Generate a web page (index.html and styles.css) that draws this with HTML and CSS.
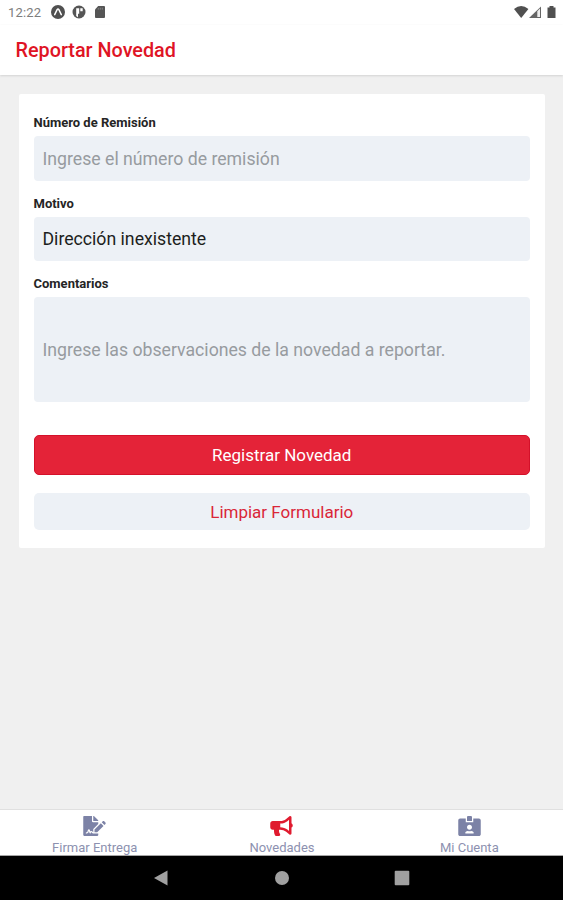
FILE: index.html
```html
<!DOCTYPE html>
<html lang="es">
<head>
<meta charset="utf-8">
<title>Reportar Novedad</title>
<link rel="stylesheet" href="styles.css">
</head>
<body>
<div class="status">
  <span class="clock">12:22</span>
  <svg class="app-icon" viewBox="0 0 14 14"><circle cx="7" cy="7" r="7" fill="#505050"/><path d="M3.7 9.6 6.1 4.7Q7 3.4 7.9 4.7L10.3 9.6" fill="none" stroke="#fff" stroke-width="1.5" stroke-linecap="round"/></svg>
  <svg class="app-icon second" viewBox="0 0 14 14"><circle cx="7" cy="7" r="6.5" fill="#555"/><path d="M4.2 3.2h3v5.6H6v3.4L4.2 11zM8.3 3.3h2.4v3H8.3z" fill="#fff"/></svg>
  <svg class="sd-icon" viewBox="0 0 11 13"><path d="M3.5 0H10q1 0 1 1v11q0 1-1 1H1q-1 0-1-1V3.7z" fill="#555"/><path d="M3.6 2v2M5.8 1.8V4M8 1.8V4" stroke="#888"/></svg>
  <svg class="signals" viewBox="0 0 43 14"><path d="M0 4Q7.2-1.8 14.4 4L7.2 13z" fill="#505050"/><path d="M15 13 27 1.5V13z" fill="#666"/><path d="M23.3 6.2 26 3.5V12h-2.7z" fill="#eee"/><path d="M33.5 2.5h2V1h4v1.5h2V13h-8z" fill="#505050"/></svg>
</div>
<header class="header"><h1>Reportar Novedad</h1></header>
<main class="content">
  <form class="card">
    <label class="label" for="remision">Número de Remisión</label>
    <input class="field" id="remision" placeholder="Ingrese el número de remisión">
    <label class="label" for="motivo">Motivo</label>
    <input class="field motivo" id="motivo" value="Dirección inexistente">
    <label class="label comments-label" for="comentarios">Comentarios</label>
    <input class="field comments" id="comentarios" placeholder="Ingrese las observaciones de la novedad a reportar.">
    <button class="button primary" type="button">Registrar Novedad</button>
    <button class="button secondary" type="button">Limpiar Formulario</button>
  </form>
</main>
<nav class="tabs">
  <a class="tab"><svg viewBox="0 0 576 512"><path d="M218.17 424.14c-2.95-5.92-8.09-6.52-10.17-6.52s-7.22.59-10.02 6.19l-7.67 15.34c-6.37 12.78-25.03 11.37-29.48-2.09L144 386.59l-10.61 31.88c-5.89 17.66-22.38 29.53-41 29.53H80c-8.84 0-16-7.16-16-16s7.16-16 16-16h12.39c4.83 0 9.11-3.08 10.64-7.66l18.19-54.64c3.3-9.81 12.44-16.41 22.78-16.41s19.48 6.59 22.77 16.41l13.88 41.64c19.75-16.19 54.06-9.7 66 14.16 1.89 3.78 5.49 5.95 9.36 6.26v-82.12l128-127.09V160H248c-13.2 0-24-10.8-24-24V0H24C10.7 0 0 10.7 0 24v464c0 13.3 10.7 24 24 24h336c13.3 0 24-10.7 24-24v-40l-128-.11c-16.12-.31-30.58-9.28-37.83-23.75zM384 121.9c0-6.3-2.5-12.4-7-16.9L279.1 7c-4.5-4.5-10.6-7-17-7H256v128h128v-6.1zm-96 225.06V416h68.99l161.68-162.78-67.88-67.88L288 346.96zm280.54-179.63l-31.87-31.87c-9.94-9.94-26.07-9.94-36.01 0l-27.25 27.25 67.88 67.88 27.25-27.25c9.95-9.94 9.95-26.07 0-36.01z"/></svg><span>Firmar Entrega</span></a>
  <a class="tab active"><svg viewBox="0 0 576 512"><path d="M576 240c0-23.63-12.95-44.04-32-55.12V32.01C544 23.26 537.02 0 512 0c-7.12 0-14.19 2.38-19.98 7.02l-85.03 68.03C364.28 109.19 310.66 128 256 128H64c-35.35 0-64 28.65-64 64v96c0 35.35 28.65 64 64 64h33.7c-1.39 10.48-2.18 21.14-2.18 32 0 39.77 9.26 77.35 25.56 110.94 5.19 10.69 16.52 17.06 28.4 17.06h74.28c26.05 0 41.69-29.84 25.9-50.56-16.4-21.52-26.15-48.36-26.15-77.44 0-11.11 1.62-21.79 4.41-32H256c54.66 0 108.28 18.81 150.98 52.95l85.03 68.03a32.023 32.023 0 0 0 19.98 7.02c24.92 0 32-22.78 32-32V295.13C563.05 284.04 576 263.63 576 240zm-96 141.42l-33.05-26.44C392.95 311.78 325.12 288 256 288v-96c69.12 0 136.95-23.78 190.95-66.98L480 98.58v282.84z"/></svg><span>Novedades</span></a>
  <a class="tab"><svg viewBox="0 0 576 512"><path d="M528 64H384v96H192V64H48C21.5 64 0 85.5 0 112v352c0 26.5 21.5 48 48 48h480c26.5 0 48-21.5 48-48V112c0-26.5-21.5-48-48-48zM288 224c35.3 0 64 28.7 64 64s-28.7 64-64 64-64-28.7-64-64 28.7-64 64-64zm93.3 224H194.7c-10.4 0-18.8-10-15.6-19.8 8.3-25.6 32.4-44.2 60.9-44.2h8.2c12.3 5.1 25.7 8 39.8 8s27.6-2.9 39.8-8h8.2c28.4 0 52.5 18.5 60.9 44.2 3.2 9.9-5.2 19.8-15.6 19.8zM352 32c0-17.7-14.3-32-32-32h-64c-17.7 0-32 14.3-32 32v96h128V32z"/></svg><span>Mi Cuenta</span></a>
</nav>
<div class="system-nav">
  <svg viewBox="0 0 16 16"><path d="M1 8 14.5.5v15z"/></svg>
  <svg viewBox="0 0 16 16"><circle cx="8" cy="8" r="7"/></svg>
  <svg viewBox="0 0 16 16"><rect x=".7" y=".7" width="14.6" height="14.6" rx="1"/></svg>
</div>
</body>
</html>
```

FILE: styles.css
```css
* { box-sizing: border-box; }
body {
  margin: 0;
  height: 900px;
  display: flex;
  flex-direction: column;
  overflow: hidden;
  background: #f0f0f0;
  font-family: Roboto, sans-serif;
}
.status {
  height: 25px;
  display: flex;
  align-items: center;
  padding: 0 6px 1px 8px;
  background: #fff;
}
.clock { width: 43px; font-size: 13px; letter-spacing: 0.2px; color: #7d7d7d; }
.app-icon { width: 14px; height: 14px; }
.second { margin-left: 7px; }
.sd-icon { width: 10px; height: 12px; margin-left: 9px; }
.signals { width: 43px; height: 14px; margin-left: auto; }
.header {
  height: 50px;
  padding-left: 15.5px;
  background: #fff;
  box-shadow: 0 1px 2px #d4d4d4;
}
h1 {
  margin: 0;
  font-size: 19.8px;
  line-height: 51px;
  font-weight: 500;
  color: #df1425;
}
.content { flex: 1; padding: 19px 18.5px 0 19px; }
.card {
  height: 454px;
  display: flex;
  flex-direction: column;
  padding: 21px 14.5px 0;
  background: #fff;
  border-radius: 2px;
}
.label {
  height: 21px;
  font-size: 13px;
  line-height: 16px;
  font-weight: 700;
  color: #252525;
}
.field {
  flex: none;
  width: 100%;
  height: 44.5px;
  margin: 0 0 15.5px;
  padding: 1px 9px 0;
  border: 0;
  border-radius: 4px;
  outline: 0;
  background: #edf1f6;
  color: #1c1e20;
  font: 17.7px Roboto, sans-serif;
  letter-spacing: -0.01px;
}
.field::placeholder { color: #979b9f; opacity: 1; }
.motivo { height: 43.5px; }
.comments-label { height: 21px; }
.comments { height: 105px; margin-bottom: 32.5px; }
.button {
  flex: none;
  padding: 1px 0 0;
  border: 0;
  border-radius: 5px;
  font: 17px Roboto, sans-serif;
}
.primary {
  height: 40px;
  margin-bottom: 18.5px;
  border: 1px solid #d4112a;
  background: #e42338;
  color: #fff;
}
.secondary { height: 36.5px; background: #edf1f6; color: #da2638; }
.tabs {
  height: 47px;
  display: grid;
  grid-template-columns: repeat(3, 1fr);
  padding-left: 1px;
  border-top: 1px solid #e0e0e0;
  border-bottom: 1px solid #a5a5a5;
  background: #fff;
}
.tab {
  display: flex;
  flex-direction: column;
  align-items: center;
  padding-top: 6px;
  font-size: 13px;
  line-height: 15px;
  color: #8d91b0;
}
.tab svg { width: 23px; height: 20px; margin-bottom: 4px; fill: #7c82a6; }
.active svg { fill: #e01b2f; }
.system-nav {
  height: 44px;
  display: flex;
  justify-content: center;
  align-items: center;
  gap: 104.5px;
  background: #000;
}
.system-nav svg { width: 16px; height: 16px; fill: #a0a0a0; }
```
